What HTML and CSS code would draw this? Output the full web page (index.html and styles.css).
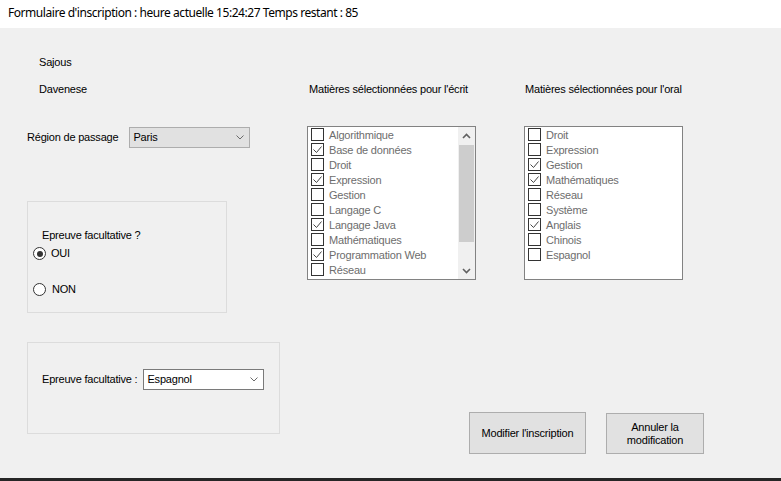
FILE: index.html
```html
<!DOCTYPE html>
<html lang="fr">
<head>
<meta charset="utf-8">
<title>Formulaire d'inscription</title>
<link rel="stylesheet" href="styles.css">
</head>
<body>
<div class="titlebar">Formulaire d'inscription : heure actuelle 15:24:27 Temps restant : 85</div>
<div class="form">
  <div class="col-left">
    <div class="name first">Sajous</div>
    <div class="name">Davenese</div>
    <div class="region-row">
      <span class="region-label">Région de passage</span>
      <div class="combo combo-gray">
        <span>Paris</span>
        <svg class="chev" width="8" height="5" viewBox="0 0 8 5"><polyline points="0.5,0.5 4,4 7.5,0.5" fill="none" stroke="#6b6b6b" stroke-width="1"/></svg>
      </div>
    </div>
    <div class="group group-radio">
      <div class="group-label">Epreuve facultative ?</div>
      <div class="radio-row"><span class="radio checked"></span><span class="radio-text">OUI</span></div>
      <div class="radio-row second"><span class="radio"></span><span class="radio-text non">NON</span></div>
    </div>
    <div class="group group-option">
      <span class="option-label">Epreuve facultative :</span>
      <div class="combo combo-white">
        <span>Espagnol</span>
        <svg class="chev" width="8" height="5" viewBox="0 0 8 5"><polyline points="0.5,0.5 4,4 7.5,0.5" fill="none" stroke="#6b6b6b" stroke-width="1"/></svg>
      </div>
    </div>
  </div>
  <div class="col-right">
    <div class="lists">
      <div class="list-col list-ecrit">
        <div class="list-title">Matières sélectionnées pour l'écrit</div>
        <div class="checklist">
          <div class="items">
            <div class="item"><span class="cb"></span><span class="it">Algorithmique</span></div>
            <div class="item"><span class="cb on"><svg viewBox="0 0 11 11" width="11" height="11"><polyline points="1.5,5.5 4.5,8.5 9.5,2.5" fill="none" stroke="#444" stroke-width="1"/></svg></span><span class="it">Base de données</span></div>
            <div class="item"><span class="cb"></span><span class="it">Droit</span></div>
            <div class="item"><span class="cb on"><svg viewBox="0 0 11 11" width="11" height="11"><polyline points="1.5,5.5 4.5,8.5 9.5,2.5" fill="none" stroke="#444" stroke-width="1"/></svg></span><span class="it">Expression</span></div>
            <div class="item"><span class="cb"></span><span class="it">Gestion</span></div>
            <div class="item"><span class="cb"></span><span class="it">Langage C</span></div>
            <div class="item"><span class="cb on"><svg viewBox="0 0 11 11" width="11" height="11"><polyline points="1.5,5.5 4.5,8.5 9.5,2.5" fill="none" stroke="#444" stroke-width="1"/></svg></span><span class="it">Langage Java</span></div>
            <div class="item"><span class="cb"></span><span class="it">Mathématiques</span></div>
            <div class="item"><span class="cb on"><svg viewBox="0 0 11 11" width="11" height="11"><polyline points="1.5,5.5 4.5,8.5 9.5,2.5" fill="none" stroke="#444" stroke-width="1"/></svg></span><span class="it">Programmation Web</span></div>
            <div class="item"><span class="cb"></span><span class="it">Réseau</span></div>
          </div>
          <div class="scrollbar">
            <div class="sb-btn"><svg width="9" height="6" viewBox="0 0 9 6"><polyline points="1,5 4.5,1.5 8,5" fill="none" stroke="#606060" stroke-width="1.6"/></svg></div>
            <div class="sb-track"><div class="sb-thumb"></div></div>
            <div class="sb-btn"><svg width="9" height="6" viewBox="0 0 9 6"><polyline points="1,1 4.5,4.5 8,1" fill="none" stroke="#606060" stroke-width="1.6"/></svg></div>
          </div>
        </div>
      </div>
      <div class="list-col list-oral">
        <div class="list-title">Matières sélectionnées pour l'oral</div>
        <div class="checklist">
          <div class="items">
            <div class="item"><span class="cb"></span><span class="it">Droit</span></div>
            <div class="item"><span class="cb"></span><span class="it">Expression</span></div>
            <div class="item"><span class="cb on"><svg viewBox="0 0 11 11" width="11" height="11"><polyline points="1.5,5.5 4.5,8.5 9.5,2.5" fill="none" stroke="#444" stroke-width="1"/></svg></span><span class="it">Gestion</span></div>
            <div class="item"><span class="cb on"><svg viewBox="0 0 11 11" width="11" height="11"><polyline points="1.5,5.5 4.5,8.5 9.5,2.5" fill="none" stroke="#444" stroke-width="1"/></svg></span><span class="it">Mathématiques</span></div>
            <div class="item"><span class="cb"></span><span class="it">Réseau</span></div>
            <div class="item"><span class="cb"></span><span class="it">Système</span></div>
            <div class="item"><span class="cb on"><svg viewBox="0 0 11 11" width="11" height="11"><polyline points="1.5,5.5 4.5,8.5 9.5,2.5" fill="none" stroke="#444" stroke-width="1"/></svg></span><span class="it">Anglais</span></div>
            <div class="item"><span class="cb"></span><span class="it">Chinois</span></div>
            <div class="item"><span class="cb"></span><span class="it">Espagnol</span></div>
          </div>
        </div>
      </div>
    </div>
    <div class="buttons">
      <button class="btn btn-modify">Modifier l'inscription</button>
      <button class="btn btn-cancel">Annuler la<br>modification</button>
    </div>
  </div>
</div>
<div class="taskbar"></div>
</body>
</html>
```
FILE: styles.css
```css
* { box-sizing: border-box; }
html, body { margin: 0; padding: 0; }
body {
  width: 781px;
  height: 481px;
  overflow: hidden;
  background: #f0f0f0;
  font-family: "Liberation Sans", Arial, sans-serif;
  font-size: 11px;
  letter-spacing: -0.2px;
  color: #000;
}
.titlebar {
  height: 28px;
  background: #fff;
  font-family: "Noto Sans", "Open Sans", sans-serif;
  font-size: 12px;
  letter-spacing: -0.45px;
  line-height: 26px;
  padding-left: 8px;
  color: #000;
  white-space: nowrap;
}
.form {
  height: 450px;
  display: flex;
  padding-left: 27px;
}
.taskbar {
  height: 3px;
  background: #262626;
}

/* left column */
.col-left {
  width: 253px;
  display: flex;
  flex-direction: column;
  align-items: flex-start;
}
.name {
  line-height: 13px;
  margin-left: 12px;
  margin-top: 14px;
}
.name.first { margin-top: 28px; }
.region-row {
  margin-top: 31px;
  display: flex;
  align-items: center;
  height: 21px;
}
.region-label { line-height: 13px; }
.combo {
  display: flex;
  align-items: center;
  justify-content: space-between;
  height: 21px;
  padding: 0 5px 0 3px;
  line-height: 13px;
}
.combo-gray {
  margin-left: 11px;
  width: 121px;
  background: #e1e1e1;
  border: 1px solid #adadad;
}
.combo-white {
  margin-left: 6px;
  width: 121px;
  background: #fff;
  border: 1px solid #7a7a7a;
}
.chev { display: block; }

.group {
  border: 1px solid #dcdcdc;
}
.group-radio {
  margin-top: 53px;
  width: 200px;
  height: 112px;
  padding: 27px 0 0 5px;
}
.group-label {
  line-height: 13px;
  margin-left: 9px;
}
.radio-row {
  display: flex;
  align-items: center;
  height: 13px;
  margin-top: 5px;
}
.radio-row.second { margin-top: 23px; }
.radio {
  width: 13px;
  height: 13px;
  border: 1px solid #333;
  border-radius: 50%;
  background: #fff;
  position: relative;
  flex: none;
}
.radio.checked::after {
  content: "";
  position: absolute;
  left: 2.5px;
  top: 2.5px;
  width: 6px;
  height: 6px;
  border-radius: 50%;
  background: #333;
}
.radio-text { margin-left: 5px; line-height: 13px; }
.radio-text.non { margin-left: 6px; }

.group-option {
  margin-top: 29px;
  width: 253px;
  height: 92px;
  padding: 26px 0 0 14px;
  display: flex;
  align-items: flex-start;
}
.option-label { line-height: 21px; }

/* right area */
.col-right {
  margin-left: 27px;
  display: flex;
  flex-direction: column;
}
.lists {
  display: flex;
  gap: 48px;
}
.list-title {
  margin-top: 55px;
  line-height: 13px;
  white-space: nowrap;
}
.list-ecrit .list-title { padding-left: 2px; }
.list-oral .list-title { padding-left: 1px; }
.checklist {
  margin-top: 30px;
  height: 154px;
  border: 1px solid #828282;
  background: #fff;
  display: flex;
}
.list-ecrit .checklist { width: 169px; }
.list-oral .checklist { width: 159px; }
.items { flex: 1; }
.item {
  height: 15px;
  display: flex;
  align-items: center;
  padding-left: 3px;
}
.cb {
  width: 13px;
  height: 13px;
  border: 1px solid #333;
  background: #fff;
  flex: none;
  display: flex;
}
.cb svg { display: block; }
.it {
  margin-left: 5px;
  color: #6d6d6d;
  line-height: 13px;
  padding-top: 1px;
  white-space: nowrap;
}
.scrollbar {
  width: 17px;
  background: #f0f0f0;
  display: flex;
  flex-direction: column;
}
.sb-btn {
  height: 17px;
  display: flex;
  align-items: center;
  justify-content: center;
}
.sb-track {
  flex: 1;
  padding: 1px 1px 0 1px;
}
.sb-thumb {
  height: 97px;
  background: #cdcdcd;
}

.buttons {
  margin-top: 132px;
  margin-left: 162px;
  display: flex;
  align-items: flex-start;
  gap: 20px;
}
.btn {
  font-family: "Liberation Sans", Arial, sans-serif;
  font-size: 11px;
  letter-spacing: -0.2px;
  line-height: 13px;
  color: #000;
  background: #e1e1e1;
  border: 1px solid #adadad;
  padding: 0;
  text-align: center;
}
.btn-modify { width: 117px; height: 42px; }
.btn-cancel { width: 98px; height: 41px; margin-top: 1px; }
```
